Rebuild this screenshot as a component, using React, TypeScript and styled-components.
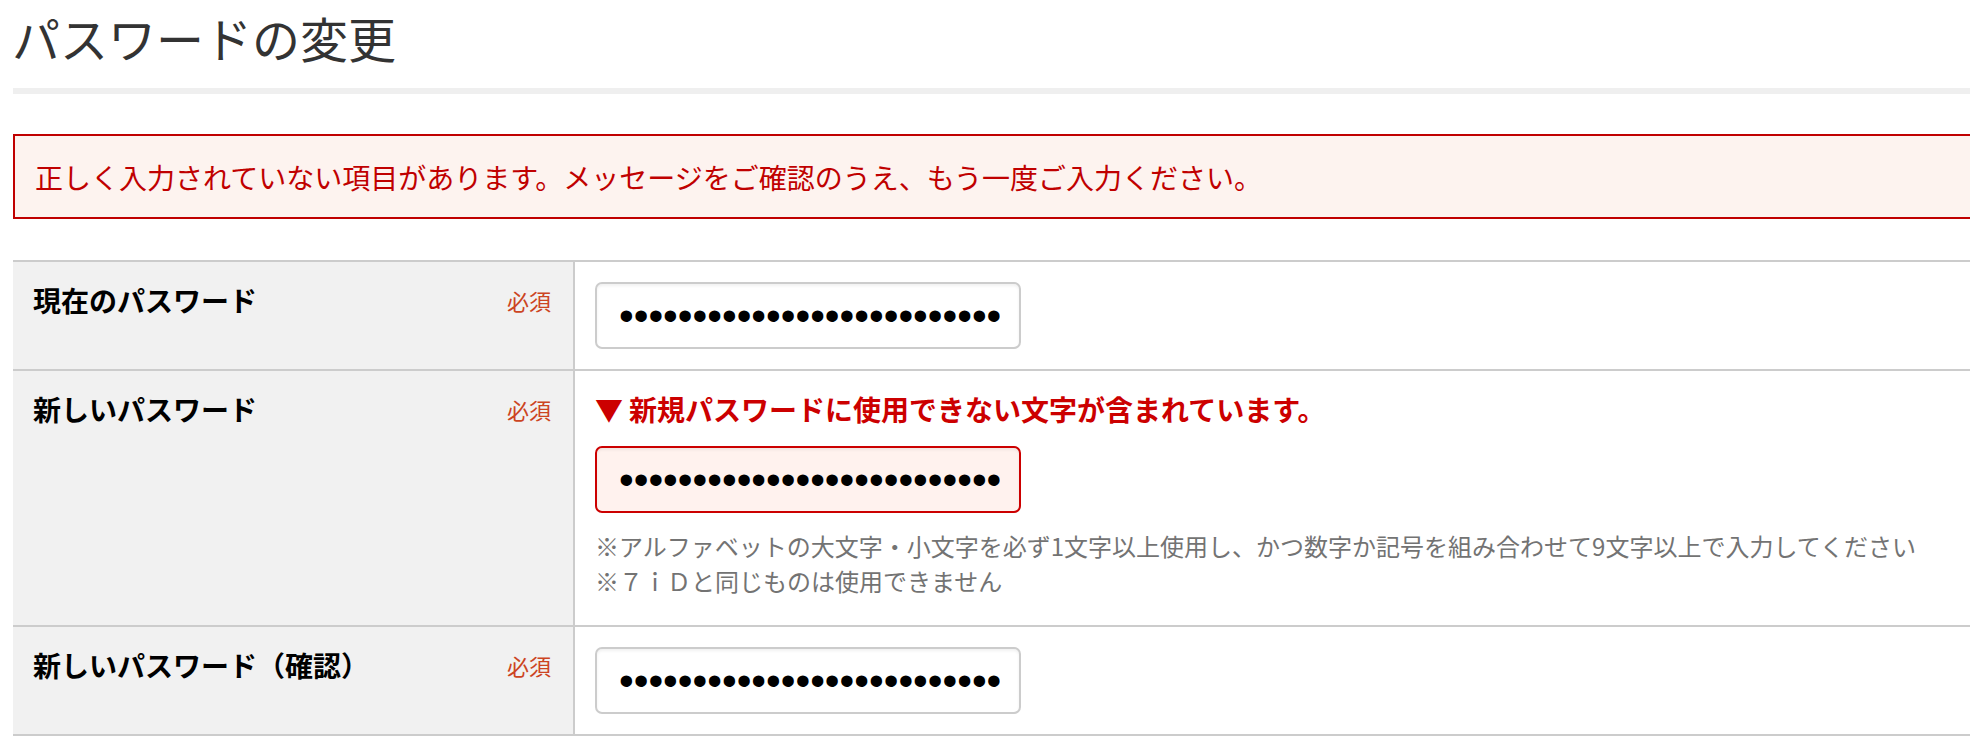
import React from "react";
import styled, { createGlobalStyle } from "styled-components";

const GlobalStyle = createGlobalStyle`
  html, body {
    margin: 0;
    padding: 0;
    overflow: hidden;
    background: #ffffff;
  }
  body {
    font-family: "Noto Sans CJK JP", "Noto Sans", sans-serif;
    color: #000;
  }
`;

const Page = styled.div`
  width: 2000px;
  padding: 13px 0 0 13px;
  box-sizing: border-box;
`;

const Title = styled.h1`
  margin: 0 0 0 -1px;
  font-size: 48px;
  line-height: 48px;
  font-weight: 400;
  color: #333333;
`;

const Divider = styled.div`
  height: 6px;
  margin-top: 27px;
  background: #efefef;
`;

const Alert = styled.div`
  margin-top: 40px;
  border: 2px solid #c00000;
  background: #fdf3ef;
  padding: 20px 20px 19px;
  font-size: 28px;
  line-height: 42px;
  color: #c00000;
`;

const Table = styled.div`
  margin-top: 41px;
  border-top: 2px solid #cccccc;
`;

const Row = styled.div`
  display: grid;
  grid-template-columns: 562px 1fr;
  border-bottom: 2px solid #cccccc;
`;

const LabelCell = styled.div`
  display: flex;
  justify-content: space-between;
  align-items: flex-start;
  padding: 17px 22px 17px 20px;
  background: #f1f1f1;
  border-right: 2px solid #cccccc;
`;

const Label = styled.span`
  font-size: 28px;
  line-height: 42px;
  font-weight: 700;
  color: #000;
`;

const Required = styled.span`
  font-size: 22px;
  line-height: 42px;
  color: #cc4422;
`;

const ValueCell = styled.div`
  display: flex;
  flex-direction: column;
  align-items: flex-start;
  padding: 20px;
  background: #ffffff;
`;

const ErrorMessage = styled.div`
  font-size: 28px;
  line-height: 32px;
  font-weight: 700;
  color: #cc0000;
  margin-top: 2px;
  margin-bottom: 21px;
`;

const ErrorMark = styled.span`
  margin-right: 6px;
`;

const PasswordInput = styled.input<{ $error?: boolean }>`
  width: 426px;
  height: 67px;
  box-sizing: border-box;
  margin: 0;
  padding: 0 19px 0 22px;
  border: 2px solid ${(p) => (p.$error ? "#cc0000" : "#cccccc")};
  border-radius: 7px;
  background: ${(p) => (p.$error ? "#fff2ee" : "#ffffff")};
  box-shadow: inset 0 2px 3px rgba(0, 0, 0, 0.06);
  font-family: "Liberation Sans", Arial, sans-serif;
  font-size: 42px;
  color: #000;
  outline: none;
`;

const Hints = styled.div`
  margin-top: 15px;
  margin-bottom: 7px;
  font-size: 24px;
  line-height: 35px;
  color: #737373;
`;

const PW = "abcdefghijklmnopqrstuvwxyz0123";

type FieldProps = {
  label: string;
  error?: string;
  hints?: string[];
};

const Field: React.FC<FieldProps> = ({ label, error, hints }) => (
  <Row>
    <LabelCell>
      <Label>{label}</Label>
      <Required>必須</Required>
    </LabelCell>
    <ValueCell>
      {error && (
        <ErrorMessage>
          <ErrorMark>▼</ErrorMark>
          {error}
        </ErrorMessage>
      )}
      <PasswordInput type="password" value={PW} readOnly $error={!!error} />
      {hints && (
        <Hints>
          {hints.map((h) => (
            <div key={h}>{h}</div>
          ))}
        </Hints>
      )}
    </ValueCell>
  </Row>
);

export default function App() {
  return (
    <>
      <GlobalStyle />
      <Page>
        <Title>パスワードの変更</Title>
        <Divider />
        <Alert>
          正しく入力されていない項目があります。メッセージをご確認のうえ、もう一度ご入力ください。
        </Alert>
        <Table>
          <Field label="現在のパスワード" />
          <Field
            label="新しいパスワード"
            error="新規パスワードに使用できない文字が含まれています。"
            hints={[
              "※アルファベットの大文字・小文字を必ず1文字以上使用し、かつ数字か記号を組み合わせて9文字以上で入力してください",
              "※７ｉＤと同じものは使用できません",
            ]}
          />
          <Field label="新しいパスワード（確認）" />
        </Table>
      </Page>
    </>
  );
}
